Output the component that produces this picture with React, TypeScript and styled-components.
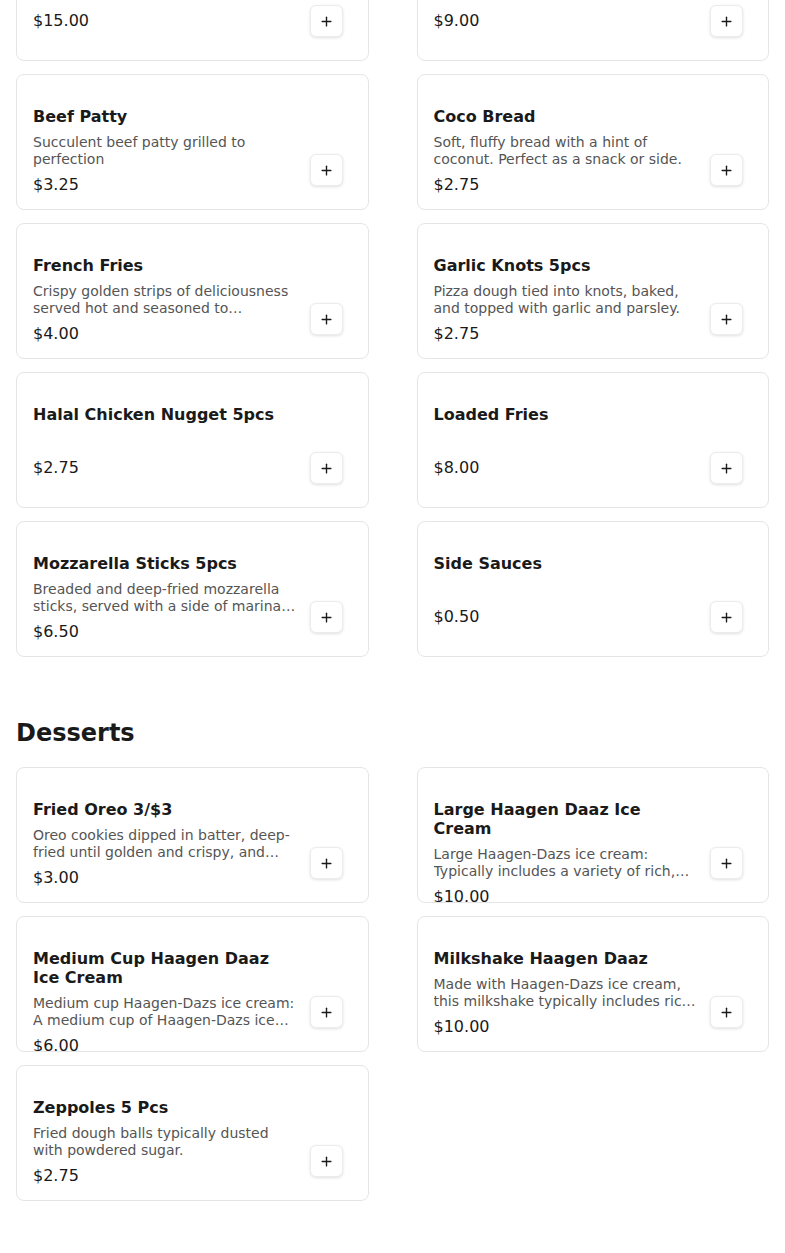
import React from "react";
import styled, { createGlobalStyle } from "styled-components";
import { Plus } from "lucide-react";

const GlobalStyle = createGlobalStyle`
  * { box-sizing: border-box; }
  html, body { margin: 0; padding: 0; background: #fff; }
  body {
    font-family: "DejaVu Sans", "Noto Sans", sans-serif;
    color: #1a1a1a;
    overflow: hidden;
  }
`;

type Item = { name: string; description?: string; price: string };

const sides: Item[] = [
  { name: "Jerk Chicken Wings", price: "$15.00" },
  { name: "Cheese Fries", price: "$9.00" },
  { name: "Beef Patty", description: "Succulent beef patty grilled to perfection", price: "$3.25" },
  { name: "Coco Bread", description: "Soft, fluffy bread with a hint of coconut. Perfect as a snack or side.", price: "$2.75" },
  { name: "French Fries", description: "Crispy golden strips of deliciousness served hot and seasoned to perfection with a pinch of salt.", price: "$4.00" },
  { name: "Garlic Knots 5pcs", description: "Pizza dough tied into knots, baked, and topped with garlic and parsley.", price: "$2.75" },
  { name: "Halal Chicken Nugget 5pcs", price: "$2.75" },
  { name: "Loaded Fries", price: "$8.00" },
  { name: "Mozzarella Sticks 5pcs", description: "Breaded and deep-fried mozzarella sticks, served with a side of marinara sauce.", price: "$6.50" },
  { name: "Side Sauces", price: "$0.50" },
];

const desserts: Item[] = [
  { name: "Fried Oreo 3/$3", description: "Oreo cookies dipped in batter, deep-fried until golden and crispy, and dusted with powdered sugar.", price: "$3.00" },
  { name: "Large Haagen Daaz Ice Cream", description: "Large Haagen-Dazs ice cream: Typically includes a variety of rich, creamy flavors.", price: "$10.00" },
  { name: "Medium Cup Haagen Daaz Ice Cream", description: "Medium cup Haagen-Dazs ice cream: A medium cup of Haagen-Dazs ice cream in your choice of flavor.", price: "$6.00" },
  { name: "Milkshake Haagen Daaz", description: "Made with Haagen-Dazs ice cream, this milkshake typically includes rich, creamy flavors blended smooth.", price: "$10.00" },
  { name: "Zeppoles 5 Pcs", description: "Fried dough balls typically dusted with powdered sugar.", price: "$2.75" },
];

// the screenshot is taken part way down the menu, so the page starts scrolled
const Page = styled.div`
  padding: 0 16px 52px;
  margin-top: -75px;
`;

const Section = styled.section`
  & + & {
    margin-top: 62px;
  }
`;

const SectionTitle = styled.h2`
  margin: 0 0 19px;
  font-size: 24px;
  line-height: 29px;
  font-weight: 700;
  color: #1a1a1a;
`;

const Grid = styled.div`
  display: grid;
  grid-template-columns: 1fr 1fr;
  column-gap: 48px;
  row-gap: 13px;
`;

const Card = styled.div`
  display: flex;
  gap: 12px;
  height: 136px;
  padding: 32px 25px 23px 16px;
  background: #fff;
  border: 1px solid #e5e5e5;
  border-radius: 8px;
  overflow: hidden;
`;

const Info = styled.div`
  flex: 1;
  min-width: 0;
  display: flex;
  flex-direction: column;

  & > * {
    flex-shrink: 0;
  }
`;

const Name = styled.div`
  font-size: 16px;
  line-height: 19px;
  font-weight: 700;
  color: #1a1a1a;
`;

const Desc = styled.div`
  margin-top: 8px;
  min-height: 19px;
  font-size: 14px;
  line-height: 17px;
  color: #555;
  display: -webkit-box;
  -webkit-line-clamp: 2;
  -webkit-box-orient: vertical;
  overflow: hidden;
`;

const Price = styled.div`
  margin-top: 7px;
  font-size: 16px;
  line-height: 19px;
  color: #1a1a1a;
`;

const AddButton = styled.button`
  align-self: flex-end;
  flex-shrink: 0;
  width: 33px;
  height: 32px;
  padding: 0;
  display: flex;
  align-items: center;
  justify-content: center;
  background: #fff;
  color: #1a1a1a;
  border: 1px solid #ececec;
  border-radius: 6px;
  box-shadow: 0 1px 3px rgba(0, 0, 0, 0.12);
  cursor: pointer;
`;

const MenuCard = ({ item }: { item: Item }) => (
  <Card>
    <Info>
      <Name>{item.name}</Name>
      <Desc>{item.description}</Desc>
      <Price>{item.price}</Price>
    </Info>
    <AddButton aria-label={`Add ${item.name}`}>
      <Plus size={15} strokeWidth={2.2} />
    </AddButton>
  </Card>
);

export default function App() {
  return (
    <>
      <GlobalStyle />
      <Page>
        <Section>
          <Grid>
            {sides.map((item) => (
              <MenuCard key={item.name} item={item} />
            ))}
          </Grid>
        </Section>
        <Section>
          <SectionTitle>Desserts</SectionTitle>
          <Grid>
            {desserts.map((item) => (
              <MenuCard key={item.name} item={item} />
            ))}
          </Grid>
        </Section>
      </Page>
    </>
  );
}
